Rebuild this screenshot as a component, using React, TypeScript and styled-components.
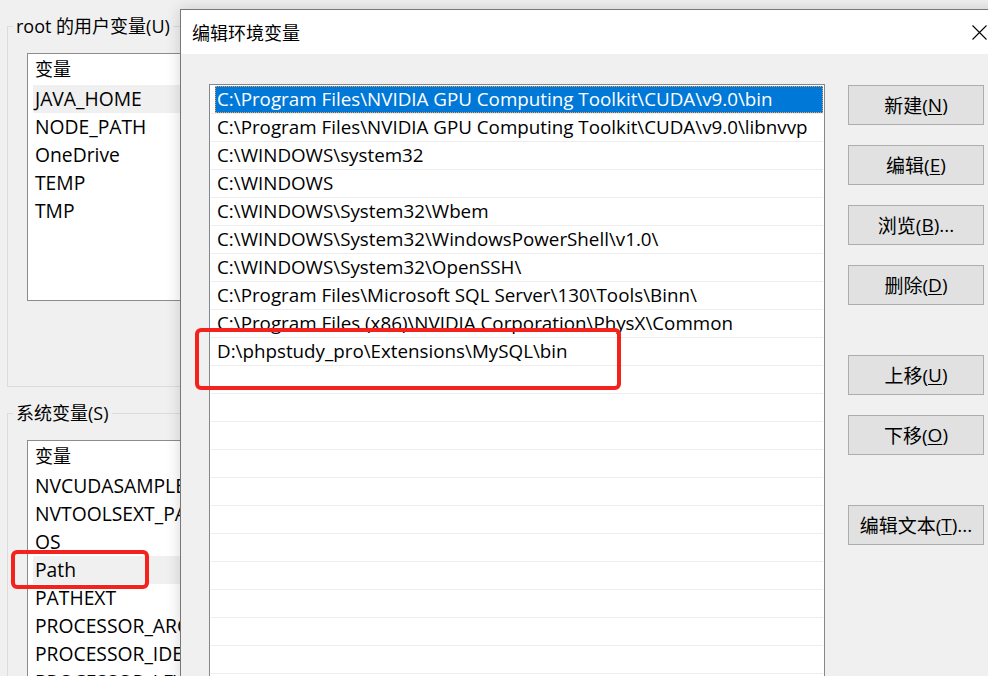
import React from "react";
import styled, { createGlobalStyle } from "styled-components";

const GlobalStyle = createGlobalStyle`
  html, body { margin: 0; padding: 0; background: #f0f0f0; }
  * { box-sizing: border-box; }
`;

const FONT = `"Open Sans", "Noto Sans CJK SC", sans-serif`;

const Screen = styled.div`
  position: relative;
  width: 988px;
  height: 676px;
  overflow: hidden;
  background: #f0f0f0;
  font-family: ${FONT};
  font-size: 18.8px;
  color: #000;
`;

/* ---------- background window ---------- */
const BackWindow = styled.div`
  display: flex;
  flex-direction: column;
  gap: 15px;
  padding: 15px 0 0 7px;
  width: 988px;
`;

const GroupBox = styled.fieldset<{ $padBottom: number }>`
  margin: 0;
  min-width: 0;
  width: 960px;
  border: 1px solid #dcdcdc;
  padding: 16px 0 ${(p) => p.$padBottom}px 19px;
`;

const Legend = styled.legend`
  margin-left: -14px;
  padding: 0 3px;
  font-size: 18px;
  line-height: 22px;
`;

const VarList = styled.div<{ $height: number }>`
  width: 420px;
  height: ${(p) => p.$height}px;
  background: #fff;
  border: 1px solid #8c8c8c;
  overflow: hidden;
`;

const VarHeader = styled.div`
  height: 31px;
  line-height: 31px;
  padding-left: 7px;
  font-size: 18px;
`;

const VarRow = styled.div<{ $selected?: boolean }>`
  height: 28px;
  line-height: 28px;
  margin-left: 5px;
  padding-left: 2px;
  white-space: nowrap;
  font-size: 19.3px;
  background: ${(p) => (p.$selected ? "#f0f0f0" : "transparent")};
`;

/* ---------- dialog ---------- */
const Dialog = styled.div`
  position: absolute;
  left: 180px;
  top: 9px;
  width: 835px;
  height: 720px;
  border: 1px solid #777;
  background: #f0f0f0;
  box-shadow: 0 0 14px rgba(0, 0, 0, 0.16);
  display: flex;
  flex-direction: column;
`;

const TitleBar = styled.div`
  height: 44px;
  flex: none;
  background: #fff;
  display: flex;
  align-items: center;
  justify-content: space-between;
  padding-left: 11px;
  font-size: 18px;
`;

const CloseButton = styled.div`
  width: 69px;
  height: 44px;
  display: flex;
  align-items: center;
  justify-content: center;
`;

const DialogBody = styled.div`
  flex: 1;
  display: flex;
  gap: 23px;
  padding: 30px 0 0 28px;
`;

const PathList = styled.div`
  width: 616px;
  height: 660px;
  flex: none;
  background: #fff;
  border: 1px solid #828790;
  padding: 1px;
  display: flex;
  flex-direction: column;
  overflow: hidden;
`;

const PathRow = styled.div`
  height: 28px;
  flex: none;
  display: flex;
  padding-left: 4px;
  border-bottom: 1px solid #ededed;
`;

const PathLabel = styled.div<{ $selected?: boolean }>`
  flex: 1;
  padding-left: 2px;
  line-height: 27px;
  white-space: nowrap;
  overflow: hidden;
  background: ${(p) => (p.$selected ? "#0078d7" : "transparent")};
  color: ${(p) => (p.$selected ? "#fff" : "#000")};
  outline: ${(p) => (p.$selected ? "1px dotted #f5a142" : "none")};
  outline-offset: -1px;
`;

const ButtonColumn = styled.div`
  display: flex;
  flex-direction: column;
  padding-top: 1px;
`;

const Button = styled.div<{ $gap: number }>`
  width: 136px;
  height: 40px;
  margin-top: ${(p) => p.$gap}px;
  background: #e1e1e1;
  border: 1px solid #adadad;
  display: flex;
  align-items: center;
  justify-content: center;
  font-size: 19px;
  white-space: nowrap;
  u {
    text-underline-offset: 2px;
  }
`;

const Annotation = styled.div<{ $x: number; $y: number; $w: number; $h: number }>`
  position: absolute;
  left: ${(p) => p.$x}px;
  top: ${(p) => p.$y}px;
  width: ${(p) => p.$w}px;
  height: ${(p) => p.$h}px;
  border: 4px solid #f4211c;
  border-radius: 6px;
  pointer-events: none;
`;

const userVars = ["JAVA_HOME", "NODE_PATH", "OneDrive", "TEMP", "TMP"];
const sysVars = [
  "NVCUDASAMPLES_ROOT",
  "NVTOOLSEXT_PATH",
  "OS",
  "Path",
  "PATHEXT",
  "PROCESSOR_ARCHITECTURE",
  "PROCESSOR_IDENTIFIER",
  "PROCESSOR_LEVEL",
];

const paths = [
  "C:\\Program Files\\NVIDIA GPU Computing Toolkit\\CUDA\\v9.0\\bin",
  "C:\\Program Files\\NVIDIA GPU Computing Toolkit\\CUDA\\v9.0\\libnvvp",
  "C:\\WINDOWS\\system32",
  "C:\\WINDOWS",
  "C:\\WINDOWS\\System32\\Wbem",
  "C:\\WINDOWS\\System32\\WindowsPowerShell\\v1.0\\",
  "C:\\WINDOWS\\System32\\OpenSSH\\",
  "C:\\Program Files\\Microsoft SQL Server\\130\\Tools\\Binn\\",
  "C:\\Program Files (x86)\\NVIDIA Corporation\\PhysX\\Common",
  "D:\\phpstudy_pro\\Extensions\\MySQL\\bin",
];

const rows = [...paths, ...Array(14).fill("")];

const buttons: { label: string; key: string; tail: string; gap: number }[] = [
  { label: "新建(", key: "N", tail: ")", gap: 0 },
  { label: "编辑(", key: "E", tail: ")", gap: 20 },
  { label: "浏览(", key: "B", tail: ")...", gap: 20 },
  { label: "删除(", key: "D", tail: ")", gap: 20 },
  { label: "上移(", key: "U", tail: ")", gap: 50 },
  { label: "下移(", key: "O", tail: ")", gap: 20 },
  { label: "编辑文本(", key: "T", tail: ")...", gap: 50 },
];

export default function App() {
  return (
    <Screen>
      <GlobalStyle />
      <BackWindow>
        <GroupBox $padBottom={85}>
          <Legend>root 的用户变量(U)</Legend>
          <VarList $height={248}>
            <VarHeader>变量</VarHeader>
            {userVars.map((v, i) => (
              <VarRow key={v} $selected={i === 0}>
                {v}
              </VarRow>
            ))}
          </VarList>
        </GroupBox>
        <GroupBox $padBottom={0}>
          <Legend>系统变量(S)</Legend>
          <VarList $height={400}>
            <VarHeader>变量</VarHeader>
            {sysVars.map((v) => (
              <VarRow key={v} $selected={v === "Path"}>
                {v}
              </VarRow>
            ))}
          </VarList>
        </GroupBox>
      </BackWindow>

      <Dialog>
        <TitleBar>
          <span>编辑环境变量</span>
          <CloseButton>
            <svg width="15" height="15" viewBox="0 0 15 15">
              <path d="M0.5 0.5 L14.5 14.5 M14.5 0.5 L0.5 14.5" stroke="#000" strokeWidth="1.1" fill="none" />
            </svg>
          </CloseButton>
        </TitleBar>
        <DialogBody>
          <PathList>
            {rows.map((p, i) => (
              <PathRow key={i}>
                <PathLabel $selected={i === 0}>{p}</PathLabel>
              </PathRow>
            ))}
          </PathList>
          <ButtonColumn>
            {buttons.map((b) => (
              <Button key={b.key} $gap={b.gap}>
                {b.label}
                <u>{b.key}</u>
                {b.tail}
              </Button>
            ))}
          </ButtonColumn>
        </DialogBody>
      </Dialog>

      <Annotation $x={195} $y={328} $w={426} $h={62} />
      <Annotation $x={11} $y={550} $w={138} $h={39} />
    </Screen>
  );
}
